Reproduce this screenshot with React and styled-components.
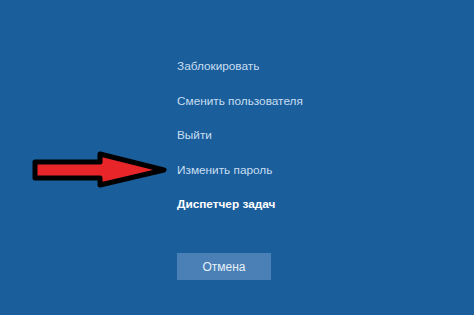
import React from 'react'
import styled, { createGlobalStyle } from 'styled-components';

const Global = createGlobalStyle`
    html, body {
        margin: 0;
        padding: 0;
        background: #1a5e9c;
    }
`;

const Screen = styled.div`
    position: relative;
    width: 474px;
    height: 315px;
    background-color: #1a5e9c;
    font-family: "Liberation Sans", Arial, sans-serif;
    overflow: hidden;
    display: flex;
    flex-direction: column;
    padding: 57px 0 0 177px;
    box-sizing: border-box;
`;

const Menu = styled.div`
    display: flex;
    flex-direction: column;
    gap: 16.5px;
`;

const MenuItem = styled.div`
    color: ${p => (p.$bright ? '#ffffff' : '#c9def1')};
    font-weight: ${p => (p.$bright ? 700 : 400)};
    font-size: 11.8px;
    line-height: 18px;
    height: 18px;
    cursor: pointer;
`;

const CancelButton = styled.button`
    margin-top: 40px;
    width: 94px;
    height: 27px;
    border: none;
    background-color: #4a80b5;
    color: #e6f0fa;
    font-family: inherit;
    font-size: 12px;
    padding: 0;
`;

const Arrow = styled.svg`
    position: absolute;
    left: 30px;
    top: 150px;
`;

const items = [
    'Заблокировать',
    'Сменить пользователя',
    'Выйти',
    'Изменить пароль',
];

const App = () => (
    <>
        <Global />
        <Screen>
            <Menu>
                {items.map(t => (
                    <MenuItem key={t}>{t}</MenuItem>
                ))}
                <MenuItem $bright>Диспетчер задач</MenuItem>
            </Menu>
            <CancelButton>Отмена</CancelButton>
            <Arrow width="140" height="40" viewBox="0 0 140 40">
                <path
                    d="M5 12 L70 12 L70 4 L134 20 L70 35 L70 28 L5 28 Z"
                    fill="#e8262a"
                    stroke="#000"
                    strokeWidth="5"
                    strokeLinejoin="round"
                />
            </Arrow>
        </Screen>
    </>
);

export default App
